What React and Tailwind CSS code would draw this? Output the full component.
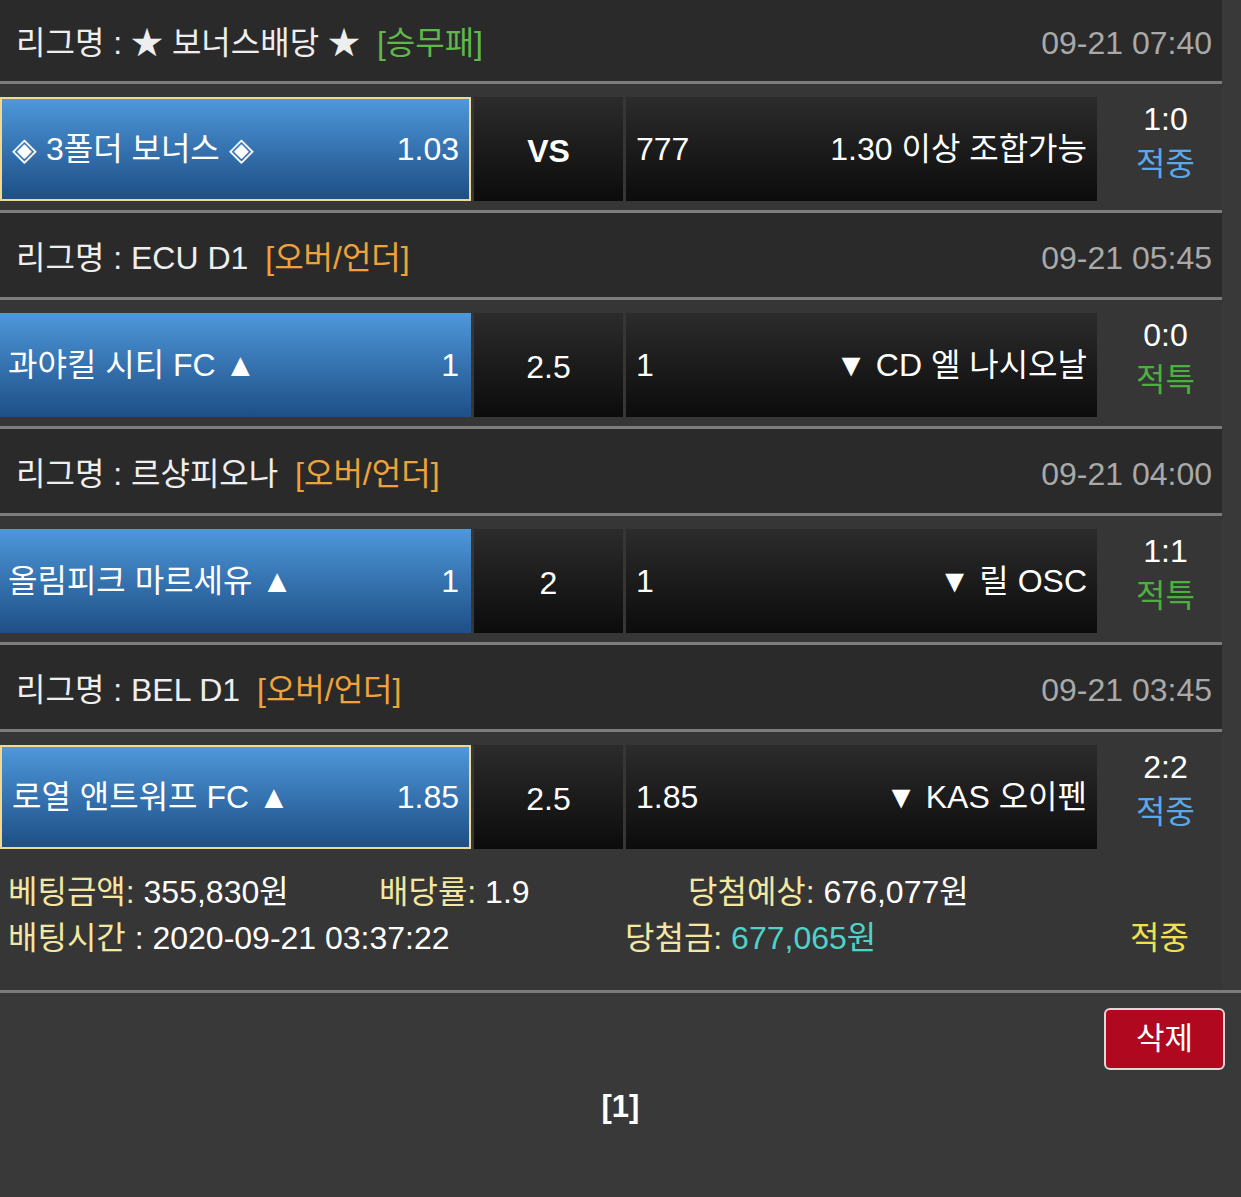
const FONT = { fontFamily: '"Liberation Sans", "Noto Sans CJK KR", sans-serif' }

const games = [
  {
    league: '★ 보너스배당 ★',
    type: '[승무패]',
    typeColor: 'text-[#5fb84a]',
    time: '09-21 07:40',
    home: '◈ 3폴더 보너스 ◈',
    homeOdds: '1.03',
    mid: 'VS',
    midBold: true,
    awayOdds: '777',
    away: '1.30 이상 조합가능',
    score: '1:0',
    result: '적중',
    resultColor: 'text-[#5aa8e8]',
    picked: true,
    first: true,
  },
  {
    league: 'ECU D1',
    type: '[오버/언더]',
    typeColor: 'text-[#f0a23a]',
    time: '09-21 05:45',
    home: '과야킬 시티 FC ▲',
    homeOdds: '1',
    mid: '2.5',
    awayOdds: '1',
    away: '▼ CD 엘 나시오날',
    score: '0:0',
    result: '적특',
    resultColor: 'text-[#4caf3f]',
  },
  {
    league: '르샹피오나',
    type: '[오버/언더]',
    typeColor: 'text-[#f0a23a]',
    time: '09-21 04:00',
    home: '올림피크 마르세유 ▲',
    homeOdds: '1',
    mid: '2',
    awayOdds: '1',
    away: '▼ 릴 OSC',
    score: '1:1',
    result: '적특',
    resultColor: 'text-[#4caf3f]',
  },
  {
    league: 'BEL D1',
    type: '[오버/언더]',
    typeColor: 'text-[#f0a23a]',
    time: '09-21 03:45',
    home: '로열 앤트워프 FC ▲',
    homeOdds: '1.85',
    mid: '2.5',
    awayOdds: '1.85',
    away: '▼ KAS 오이펜',
    score: '2:2',
    result: '적중',
    resultColor: 'text-[#5aa8e8]',
    picked: true,
    last: true,
  },
]

function GameBlock({ g }) {
  return (
    <>
      <div
        className={`flex items-center justify-between border-b-[3px] border-[#7c7c7c] bg-[#2a2a2a] pl-4 pr-[10px] ${
          g.first ? 'h-[84px] pt-[4px]' : 'h-[87px] pt-[6px]'
        }`}
      >
        <div className="text-[#eeeeee]">
          리그명 : {g.league} <span className={`ml-2 ${g.typeColor}`}>{g.type}</span>
        </div>
        <div className="text-[#a9a9a9]">{g.time}</div>
      </div>
      <div className={`flex bg-[#363636] pt-[13px] ${g.last ? 'pb-0' : 'pb-[9px] border-b-[3px] border-[#7c7c7c]'}`}>
        <div
          className={`flex h-[104px] w-[471px] items-center justify-between bg-gradient-to-b from-[#4e98db] to-[#1e4f86] text-white ${
            g.picked ? 'border-2 border-[#f2d98e] pl-[10px] pr-[10px]' : 'pl-2 pr-3'
          }`}
        >
          <span>{g.home}</span>
          <span>{g.homeOdds}</span>
        </div>
        <div
          className={`ml-[3px] flex h-[104px] w-[149px] items-center justify-center bg-gradient-to-b from-[#2c2c2c] to-[#0c0c0c] pt-1 text-white ${
            g.midBold ? 'font-bold' : ''
          }`}
        >
          {g.mid}
        </div>
        <div className="ml-[3px] flex h-[104px] w-[471px] items-center justify-between bg-gradient-to-b from-[#2c2c2c] to-[#0c0c0c] pl-[10px] pr-[10px] text-white">
          <span>{g.awayOdds}</span>
          <span>{g.away}</span>
        </div>
        <div className="flex h-[104px] flex-1 flex-col items-center justify-center pb-[14px] pl-3 leading-[45px]">
          <span className="text-white">{g.score}</span>
          <span className={g.resultColor}>{g.result}</span>
        </div>
      </div>
    </>
  )
}

export default function App() {
  return (
    <div className="min-h-[1197px] w-[1241px] bg-[#393939] text-[32px]" style={FONT}>
      <div className="w-[1222px]">
        {games.map((g, i) => (
          <GameBlock key={i} g={g} />
        ))}
        <div className="bg-[#363636] pb-[29px] pt-[20px] pl-2 leading-[46px]">
          <div className="flex">
            <span className="w-[371px]">
              <span className="text-[#f3e7a3]">베팅금액:</span> <span className="text-white">355,830원</span>
            </span>
            <span className="w-[309px]">
              <span className="text-[#f3e7a3]">배당률:</span> <span className="text-white">1.9</span>
            </span>
            <span>
              <span className="text-[#f3e7a3]">당첨예상:</span> <span className="text-white">676,077원</span>
            </span>
          </div>
          <div className="flex">
            <span className="w-[617px]">
              <span className="text-[#f3e7a3]">배팅시간</span> <span className="text-white">: 2020-09-21 03:37:22</span>
            </span>
            <span className="w-[505px]">
              <span className="text-[#f3e7a3]">당첨금:</span> <span className="text-[#4fd3c8]">677,065원</span>
            </span>
            <span className="text-[#f0e050]">적중</span>
          </div>
        </div>
      </div>
      <div className="border-t-[3px] border-[#7c7c7c]">
        <div className="flex justify-end pr-[16px] pt-[15px]">
          <button className="flex h-[62px] w-[121px] items-center justify-center rounded-md border-2 border-[#e0d8d8] bg-[#b0081f] text-[31px] text-white">
            삭제
          </button>
        </div>
        <div className="mt-[14px] text-center text-[31px] font-bold text-white">[1]</div>
      </div>
    </div>
  )
}
